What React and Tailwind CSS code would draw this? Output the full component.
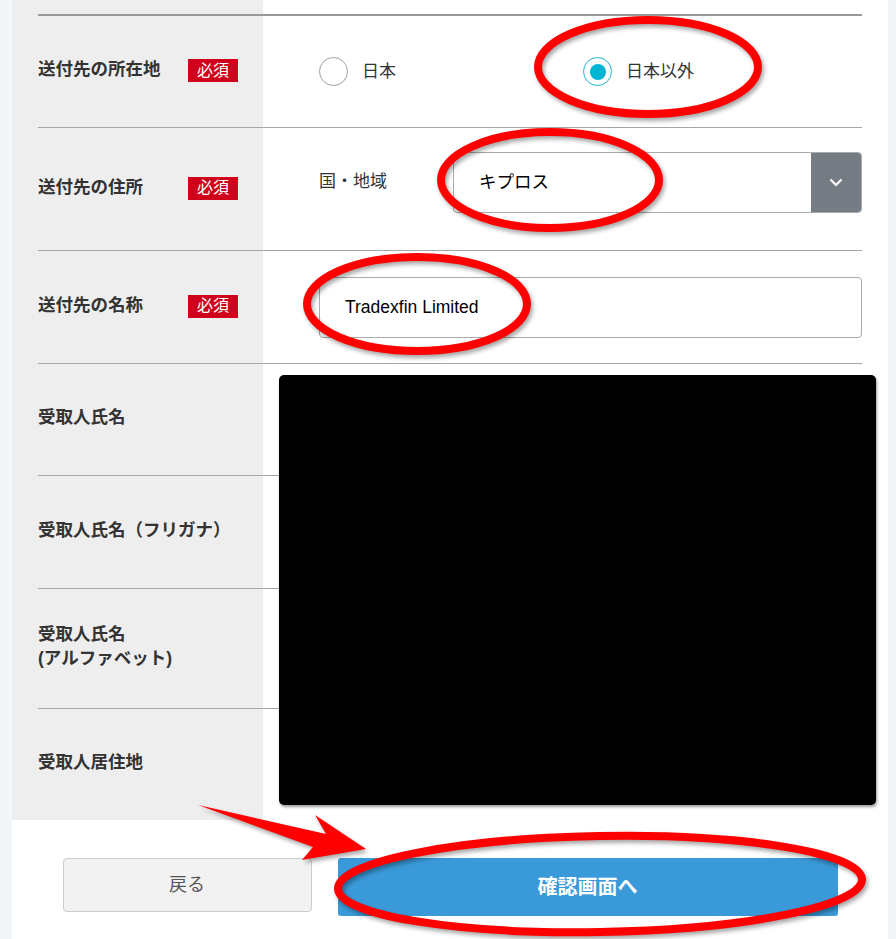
import { useState } from 'react';

const JP = "font-['Liberation_Sans','Noto_Sans_CJK_JP',sans-serif]";

const ROWS = [
  { label: '送付先の所在地', required: true, h: 'h-[112px]', field: 'radio' },
  { label: '送付先の住所', required: true, h: 'h-[123px]', field: 'select' },
  { label: '送付先の名称', required: true, h: 'h-[113px]', field: 'input' },
  { label: '受取人氏名', h: 'h-[112px]' },
  { label: '受取人氏名（フリガナ）', h: 'h-[113px]' },
  { label: ['受取人氏名', '(アルファベット)'], h: 'h-[120px]' },
  { label: '受取人居住地', h: 'h-[111px]', last: true },
];

export default function App() {
  const [place, setPlace] = useState('abroad');

  return (
    <div className={`relative h-[939px] w-[896px] overflow-hidden bg-[#f3f6f9] ${JP}`}>
      <div className="ml-[12px] h-full w-[876px] bg-white">
        {/* form table: grey label column drawn as background */}
        <div className="bg-[linear-gradient(to_right,#eeeeee_251px,#ffffff_251px)] px-[26px] pt-[14px]">
          <div className="border-t-2 border-[#999999]">
            {ROWS.map((row, i) => (
              <div
                key={i}
                className={`flex ${row.h} ${row.last ? '' : 'border-b border-[#a6a6a6]'}`}
              >
                <div className="flex w-[225px] shrink-0 items-center pb-[5px]">
                  <div className="w-[150px] shrink-0 whitespace-nowrap text-[17.5px] font-bold leading-[24px] text-[#333333]">
                    {Array.isArray(row.label) ? row.label.map((l) => <div key={l}>{l}</div>) : row.label}
                  </div>
                  {row.required && (
                    <span className="mt-[3px] flex h-[23px] w-[50px] items-center justify-center bg-[#d0021b] text-[16px] leading-none text-white">
                      必須
                    </span>
                  )}
                </div>
                <div className={`flex flex-1 items-center pl-[56px] ${row.field === 'select' ? 'pb-[14px]' : ''}`}>
                  {row.field === 'radio' && (
                    <div className="flex items-center">
                      <Radio label="日本" checked={place === 'jp'} onClick={() => setPlace('jp')} width="w-[264px]" />
                      <Radio label="日本以外" checked={place === 'abroad'} onClick={() => setPlace('abroad')} />
                    </div>
                  )}
                  {row.field === 'select' && (
                    <div className="flex flex-1 items-center">
                      <span className="w-[134px] shrink-0 text-[17px] text-[#333333]">国・地域</span>
                      <div className="flex h-[61px] flex-1 overflow-hidden rounded-[4px] border border-[#aaaaaa]">
                        <div className="flex flex-1 items-center pl-[25px] text-[17.5px] text-black">キプロス</div>
                        <div className="flex w-[50px] items-center justify-center bg-[#767c83]">
                          <svg width="14" height="9" viewBox="0 0 14 9" fill="none">
                            <polyline points="1.5,1.5 7,7 12.5,1.5" stroke="#ffffff" strokeWidth="2.2" />
                          </svg>
                        </div>
                      </div>
                    </div>
                  )}
                  {row.field === 'input' && (
                    <div className="flex h-[61px] flex-1 items-center rounded-[4px] border border-[#aaaaaa] pl-[25px] font-['Liberation_Sans',sans-serif] text-[17.5px] text-black">
                      Tradexfin Limited
                    </div>
                  )}
                </div>
              </div>
            ))}
          </div>
        </div>

        {/* footer buttons */}
        <div className="flex justify-center gap-[26px] pt-[38px]">
          <button className="h-[54px] w-[249px] rounded-[4px] border border-[#cccccc] bg-[#f2f2f2] text-[18px] text-[#555555]">
            戻る
          </button>
          <button className="h-[58px] w-[500px] rounded-[3px] bg-[#3a9ad9] text-[20px] font-bold text-white">
            確認画面へ
          </button>
        </div>
      </div>

      {/* redaction box */}
      <div className="absolute left-[279px] top-[375px] h-[430px] w-[597px] rounded-[5px] bg-black shadow-[1px_2px_3px_rgba(0,0,0,0.4)]" />

      {/* red annotations */}
      <svg
        className="pointer-events-none absolute left-0 top-0 drop-shadow-[2px_3px_2px_rgba(0,0,0,0.35)]"
        width="896"
        height="939"
        viewBox="0 0 896 939"
        fill="none"
      >
        <g stroke="#ff0000" strokeWidth="8">
          <ellipse cx="648" cy="67" rx="110" ry="47" />
          <ellipse cx="550" cy="180" rx="109" ry="48" />
          <ellipse cx="417" cy="304" rx="110" ry="47" />
          <ellipse cx="600" cy="884" rx="262" ry="48" transform="rotate(-1 600 884)" />
        </g>
        <polygon points="198,805 326,834 315,815 366,849 302,860 313,847" fill="#ff0000" />
      </svg>
    </div>
  );
}

function Radio({ label, checked, onClick, width = '' }) {
  return (
    <button onClick={onClick} className={`flex items-center gap-[14px] ${width}`}>
      <span
        className={`flex h-[29px] w-[29px] items-center justify-center rounded-full border ${
          checked ? 'border-[#1fb5d2]' : 'border-[#a0a0a0]'
        }`}
      >
        {checked && <span className="h-[16px] w-[16px] rounded-full bg-[#00b5d3]" />}
      </span>
      <span className="text-[17px] text-[#333333]">{label}</span>
    </button>
  );
}
